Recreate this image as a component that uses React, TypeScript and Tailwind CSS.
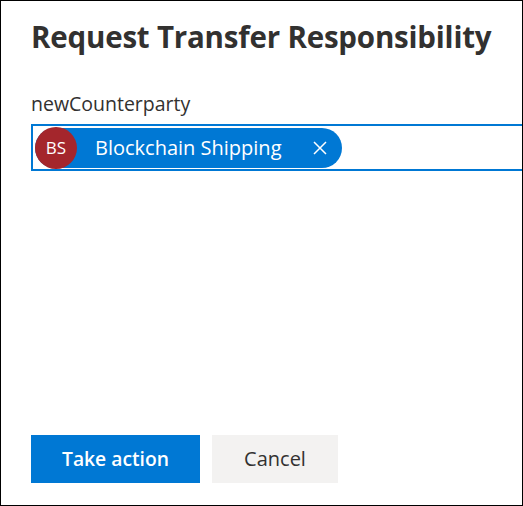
import React from "react";

const font = { fontFamily: '"Open Sans", "Noto Sans", sans-serif' };

export default function App() {
  return (
    <div
      className="w-[523px] h-[506px] border border-black bg-white flex flex-col pl-[30px] text-[#323130] overflow-hidden"
      style={font}
    >
      <h1 className="text-[29.5px] font-bold leading-[36px] mt-[18px] tracking-[-0.2px] whitespace-nowrap">
        Request Transfer Responsibility
      </h1>
      <label className="text-[19.5px] leading-[26px] mt-[36px]">newCounterparty</label>
      <div className="mt-[7px] h-[47px] border-2 border-[#0078d4] border-r-0 flex items-center pl-[2px] mr-[-2px]">
        <div className="h-[40px] w-[307px] rounded-full bg-[#0078d4] flex items-center text-white">
          <div className="w-[42px] h-[42px] rounded-full bg-[#a4262c] flex items-center justify-center text-[17px]">
            BS
          </div>
          <span className="text-[20px] ml-[18px] leading-none">Blockchain Shipping</span>
          <svg className="ml-auto mr-[15px]" width="14" height="14" viewBox="0 0 14 14">
            <path d="M1 1L13 13M13 1L1 13" stroke="white" strokeWidth="1.5" />
          </svg>
        </div>
      </div>
      <div className="flex-1" />
      <div className="flex gap-[12px] mb-[22px]">
        <button className="w-[169px] h-[48px] bg-[#0078d4] text-white text-[19.3px] font-semibold">
          Take action
        </button>
        <button className="w-[126px] h-[48px] bg-[#f3f2f1] text-[#323130] text-[20px]">
          Cancel
        </button>
      </div>
    </div>
  );
}
